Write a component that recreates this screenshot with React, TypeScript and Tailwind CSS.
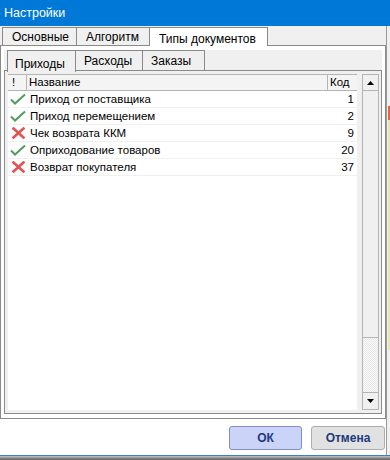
import { FC } from 'react';

const rows = [
    { ok: true, name: 'Приход от поставщика', code: 1 },
    { ok: true, name: 'Приход перемещением', code: 2 },
    { ok: false, name: 'Чек возврата ККМ', code: 9 },
    { ok: true, name: 'Оприходование товаров', code: 20 },
    { ok: false, name: 'Возврат покупателя', code: 37 },
];

const Check: FC = () => (
    <svg width="16" height="13" viewBox="0 0 16 13" className="ml-[2px] shrink-0">
        <path d="M1 6.5 L5 10.5 L15 1.5" fill="none" stroke="#4f9d5d" strokeWidth="2" />
    </svg>
);

const Cross: FC = () => (
    <svg width="13" height="12" viewBox="0 0 13 12" className="ml-[4px] shrink-0">
        <path d="M1.5 1.5 L11.5 10.5 M11.5 1.5 L1.5 10.5" fill="none" stroke="#e25454" strokeWidth="2.6" strokeLinecap="square" />
    </svg>
);

const Arrow: FC<{ down?: boolean }> = ({ down }) => (
    <svg width="7" height="4" viewBox="0 0 7 4">
        <path d={down ? 'M0 0 H7 L3.5 4 Z' : 'M0 4 H7 L3.5 0 Z'} fill="#000" />
    </svg>
);

const App: FC = () => {
    return (
        <div className="w-[390px] h-[460px] flex flex-col bg-white overflow-hidden text-[12px] text-black font-['Liberation_Sans',sans-serif] leading-none">
            {/* title */}
            <div className="h-[26px] shrink-0 bg-[#0078d7] text-white flex items-center pl-[4px] pt-[1px] text-[12.5px]">
                Настройки
            </div>

            <div className="flex flex-1">
                <div className="w-[386px] flex flex-col">
                    {/* outer tabs */}
                    <div className="h-[20px] flex bg-[#f0f0f0] pt-[1px]">
                        <div className="w-[2px] border-b border-[#8a8a8a]" />
                        <div className="w-[75px] border border-[#8a8a8a] flex items-center pl-[9px] pt-[1px]">Основные</div>
                        <div className="w-[73px] border border-l-0 border-[#8a8a8a] flex items-center pl-[9px] pt-[1px]">Алгоритм</div>
                        <div className="w-[118px] border border-b-0 border-l-0 border-[#8a8a8a] bg-white flex items-center pl-[9px] pt-[3px]">
                            Типы документов
                        </div>
                        <div className="flex-1 border-b border-[#8a8a8a]" />
                    </div>

                    {/* outer page */}
                    <div className="h-[373px] border border-t-0 border-[#8a8a8a] bg-white pt-[4px] px-[3px] pb-[4px] flex flex-col">
                        <div className="flex-1 flex flex-col bg-[#f0f0f0]">
                            {/* inner tabs */}
                            <div className="h-[21px] flex shrink-0">
                                <div className="w-[3px] border-b border-[#8a8a8a]" />
                                <div className="w-[69px] h-[22px] border border-b-0 border-[#8a8a8a] bg-[#f0f0f0] flex items-center pl-[7px] pt-[5px] relative z-10">
                                    Приходы
                                </div>
                                <div className="w-[67px] border border-l-0 border-[#8a8a8a] flex items-center pl-[8px] pt-[1px]">Расходы</div>
                                <div className="w-[62px] border border-l-0 border-[#8a8a8a] flex items-center pl-[8px] pt-[1px]">Заказы</div>
                                <div className="flex-1 border-b border-[#8a8a8a]" />
                            </div>

                            {/* inner page */}
                            <div className="flex-1 border border-t-0 border-[#8a8a8a] pt-[3px] pl-[3px] pr-[2px] pb-[3px] flex gap-[5px]">
                                <div className="w-[349px] bg-white flex flex-col text-[11.5px]">
                                    <div className="h-[17px] flex border-t border-b border-[#b4b4b4] bg-[#f4f4f4] shrink-0">
                                        <div className="w-[19px] border-r border-[#b4b4b4] pl-[4px] pt-[1px] flex items-center">!</div>
                                        <div className="flex-1 border-r border-[#b4b4b4] pl-[2px] pt-[1px] flex items-center">Название</div>
                                        <div className="w-[29px] pl-[2px] pt-[1px] flex items-center">Код</div>
                                    </div>
                                    {rows.map((r) => (
                                        <div key={r.code} className="h-[17px] flex items-center border-b border-[#f0f0f0]">
                                            <div className="w-[21px] flex items-center">{r.ok ? <Check /> : <Cross />}</div>
                                            <div className="flex-1 pl-[1px] pt-[1px]">{r.name}</div>
                                            <div className="w-[40px] text-right pr-[3px] pt-[1px]">{r.code}</div>
                                        </div>
                                    ))}
                                </div>

                                {/* scrollbar */}
                                <div className="w-[17px] flex flex-col border border-[#b4b4b4] bg-[#f0f0f0]">
                                    <div className="h-[16px] flex items-center justify-center border-b border-[#b4b4b4]">
                                        <Arrow />
                                    </div>
                                    <div className="h-[247px] border-b border-[#b4b4b4] bg-[#f0f0f0]" />
                                    <div className="flex-1 bg-[repeating-conic-gradient(#e6e6e6_0%_25%,#fbfbfb_0%_50%)] bg-[length:2px_2px]" />
                                    <div className="h-[17px] flex items-center justify-center border-t border-[#b4b4b4]">
                                        <Arrow down />
                                    </div>
                                </div>
                            </div>
                        </div>
                    </div>

                    {/* buttons */}
                    <div className="flex-1 flex justify-end items-start pt-[7px] pr-[1px] gap-[9px] bg-white">
                        <button className="w-[73px] h-[24px] rounded-[3px] border border-[#7f8fc6] bg-[#ccd3f8] text-[#1d3a7c] font-bold">
                            ОК
                        </button>
                        <button className="w-[74px] h-[24px] rounded-[3px] border border-[#adadad] bg-[#e1e1e1] text-[#1d3a7c] font-bold">
                            Отмена
                        </button>
                    </div>
                </div>

                {/* neighbouring window edge */}
                <div className="flex-1 flex flex-col bg-[#f0f0f0] border-l border-[#9a9a9a]">
                    <div className="h-[80px]" />
                    <div className="h-[14px] ml-[1px] bg-[#e2643c]" />
                    <div className="h-[230px] ml-[1px] bg-[#e9e6b4]" />
                    <div className="flex-1" />
                </div>
            </div>

            <div className="h-[1px] bg-[#3a80c8]" />
            <div className="h-[4px] bg-gradient-to-b from-[#c4c4c4] to-[#5e5e5e]" />
        </div>
    );
};

export default App;
